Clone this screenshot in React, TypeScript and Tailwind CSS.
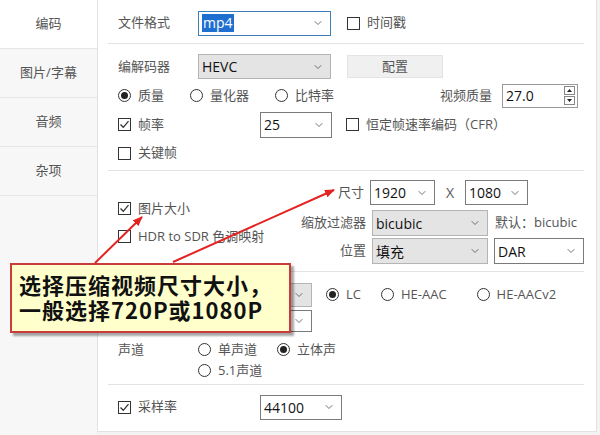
import { ChevronDown } from 'lucide-react';

const font = { fontFamily: '"Open Sans", "Noto Sans CJK SC", sans-serif' };

function Check({ checked, label }: { checked?: boolean; label: string }) {
  return (
    <div className="flex items-center gap-[7px] whitespace-nowrap">
      <div className="w-[13px] h-[13px] border border-[#333] bg-white flex items-center justify-center">
        {checked && (
          <svg width="11" height="11" viewBox="0 0 11 11">
            <path d="M1.5 5.5 L4.3 8.3 L9.5 2.2" fill="none" stroke="#333" strokeWidth="1.3" />
          </svg>
        )}
      </div>
      <span>{label}</span>
    </div>
  );
}

function Radio({ checked, label }: { checked?: boolean; label: string }) {
  return (
    <div className="flex items-center gap-[7px] whitespace-nowrap">
      <div className="w-[13px] h-[13px] rounded-full border border-[#333] bg-white flex items-center justify-center">
        {checked && <div className="w-[7px] h-[7px] rounded-full bg-[#222]" />}
      </div>
      <span>{label}</span>
    </div>
  );
}

function Select({ value, w, gray, h = 'h-[25px]', blue }: { value: string; w: string; gray?: boolean; h?: string; blue?: boolean }) {
  return (
    <div
      className={`${w} ${h} flex items-center justify-between pl-[3px] pr-[6px] border ${
        blue ? 'border-[#3d7fb8]' : gray ? 'border-[#b4b4b4]' : 'border-[#7a7a7a]'
      } ${gray ? 'bg-[#e4e4e4]' : 'bg-white'} text-[#111] text-[14px] whitespace-nowrap`}
    >
      {blue ? <span className="bg-[#1f6fd0] text-white px-[1px] leading-[18px]">{value}</span> : <span>{value}</span>}
      <ChevronDown size={12} strokeWidth={1.5} color="#444" />
    </div>
  );
}

function Sep() {
  return <div className="h-px bg-[#e3e3e3] mr-[12px] ml-[-10px]" />;
}

export default function App() {
  return (
    <div className="relative w-[600px] h-[435px] bg-[#f3f3f3] flex text-[13px] text-[#555] overflow-hidden" style={font}>
      {/* sidebar */}
      <div className="w-[97px] flex flex-col bg-[#f7f7f7]">
        <div className="h-[49px] bg-white border-b border-[#e6e6e6] flex items-center justify-center">编码</div>
        <div className="h-[49px] border-b border-[#e6e6e6] flex items-center justify-center">图片/字幕</div>
        <div className="h-[49px] border-b border-[#e6e6e6] flex items-center justify-center">音频</div>
        <div className="h-[49px] border-b border-[#e6e6e6] flex items-center justify-center">杂项</div>
      </div>

      {/* main panel */}
      <div className="w-[500px] h-[432px] bg-white border-l border-r border-b border-[#e2e2e2] pl-[20px] flex flex-col">
        <div className="h-[43px] flex items-center pt-[3px]">
          <span className="w-[80px]">文件格式</span>
          <Select value="mp4" w="w-[133px]" blue />
          <div className="ml-[16px]">
            <Check label="时间戳" />
          </div>
        </div>
        <Sep />
        <div className="h-[37px] flex items-center pt-[8px]">
          <span className="w-[80px]">编解码器</span>
          <Select value="HEVC" w="w-[133px]" gray />
          <div className="ml-[16px] w-[96px] h-[23px] bg-[#f0f0f0] border border-[#e3e3e3] flex items-center justify-center">配置</div>
        </div>
        <div className="h-[29px] flex items-center pr-[18px]">
          <div className="flex gap-[26px]">
            <Radio checked label="质量" />
            <Radio label="量化器" />
            <Radio label="比特率" />
          </div>
          <div className="ml-auto flex items-center gap-[10px]">
            <span>视频质量</span>
            <div className="w-[76px] h-[24px] border border-[#9a9a9a] flex items-center justify-between pl-[3px] pr-[2px] text-[#111] text-[14px]">
              <span>27.0</span>
              <div className="flex flex-col gap-[1px]">
                <div className="w-[11px] h-[9px] border border-[#888] flex items-center justify-center">
                  <svg width="5" height="3" viewBox="0 0 5 3"><path d="M0 3 L2.5 0 L5 3Z" fill="#222" /></svg>
                </div>
                <div className="w-[11px] h-[9px] border border-[#888] flex items-center justify-center">
                  <svg width="5" height="3" viewBox="0 0 5 3"><path d="M0 0 L2.5 3 L5 0Z" fill="#222" /></svg>
                </div>
              </div>
            </div>
          </div>
        </div>
        <div className="h-[29px] flex items-center">
          <div className="w-[142px]">
            <Check checked label="帧率" />
          </div>
          <Select value="25" w="w-[72px]" h="h-[26px]" />
          <div className="ml-[14px]">
            <Check label="恒定帧速率编码（CFR）" />
          </div>
        </div>
        <div className="h-[28px] flex items-center">
          <Check label="关键帧" />
        </div>
        <div className="h-[3px]" />
        <Sep />

        {/* size section */}
        <div className="h-[100px] flex">
          <div className="w-[182px] flex flex-col pt-[28px] gap-[8px]">
            <Check checked label="图片大小" />
            <Check label="HDR to SDR 色调映射" />
          </div>
          <div className="flex flex-col pt-[9px]">
            <div className="flex items-center h-[25px]">
              <span className="w-[64px] text-right mr-[6px] whitespace-nowrap">尺寸</span>
              <Select value="1920" w="w-[65px]" />
              <span className="w-[30px] text-center text-[14px]">X</span>
              <Select value="1080" w="w-[63px]" />
            </div>
            <div className="flex items-center h-[26px] mt-[5px]">
              <span className="w-[66px] text-right mr-[6px] whitespace-nowrap">缩放过滤器</span>
              <Select value="bicubic" w="w-[116px]" gray h="h-[26px]" />
              <span className="ml-[7px] whitespace-nowrap">默认：bicubic</span>
            </div>
            <div className="flex items-center h-[26px] mt-[2px]">
              <span className="w-[66px] text-right mr-[6px] whitespace-nowrap">位置</span>
              <Select value="填充" w="w-[116px]" gray h="h-[26px]" />
              <div className="ml-[6px]">
                <Select value="DAR" w="w-[90px]" h="h-[26px]" />
              </div>
            </div>
          </div>
        </div>
        <Sep />

        {/* audio section */}
        <div className="h-[36px] flex items-center pt-[9px]">
          <span className="w-[80px]" />
          <Select value="" w="w-[114px]" gray h="h-[24px]" />
          <div className="ml-[14px] flex gap-[20px]">
            <Radio checked label="LC" />
            <Radio label="HE-AAC" />
            <div className="ml-[10px]">
              <Radio label="HE-AACv2" />
            </div>
          </div>
        </div>
        <div className="h-[26px] flex items-center">
          <span className="w-[80px]" />
          <Select value="" w="w-[114px]" h="h-[22px]" />
        </div>
        <div className="flex pt-[6px]">
          <span className="w-[80px]">声道</span>
          <div className="flex flex-col gap-[1px]">
            <div className="flex gap-[20px]">
              <Radio label="单声道" />
              <Radio checked label="立体声" />
            </div>
            <Radio label="5.1声道" />
          </div>
        </div>
        <div className="h-[4px]" />
        <Sep />
        <div className="h-[44px] flex items-center">
          <div className="w-[142px]">
            <Check checked label="采样率" />
          </div>
          <Select value="44100" w="w-[82px]" />
        </div>
      </div>

      {/* callout */}
      <div
        className="absolute left-[10px] top-[263px] w-[281px] h-[70px] bg-[#ffffcc] border-2 border-[#c83c3c] shadow-[3px_3px_2px_rgba(0,0,0,0.35)] pl-[7px] pt-[7px] text-[22px] font-bold text-[#111] leading-[25px] tracking-[1px]"
        style={{ fontFamily: '"Noto Sans CJK SC", sans-serif' }}
      >
        <div>选择压缩视频尺寸大小，</div>
        <div>一般选择720P或1080P</div>
      </div>

      {/* arrows */}
      <svg className="absolute left-0 top-0 pointer-events-none" width="600" height="435">
        <defs>
          <marker id="ah" markerWidth="10" markerHeight="8" refX="9" refY="4" orient="auto" markerUnits="userSpaceOnUse">
            <path d="M0 0 L10 4 L0 8Z" fill="#e32222" />
          </marker>
        </defs>
        <line x1="95" y1="263" x2="142" y2="217" stroke="#e32222" strokeWidth="2" markerEnd="url(#ah)" />
        <line x1="173" y1="262" x2="334" y2="190" stroke="#e32222" strokeWidth="2" markerEnd="url(#ah)" />
      </svg>
    </div>
  );
}
